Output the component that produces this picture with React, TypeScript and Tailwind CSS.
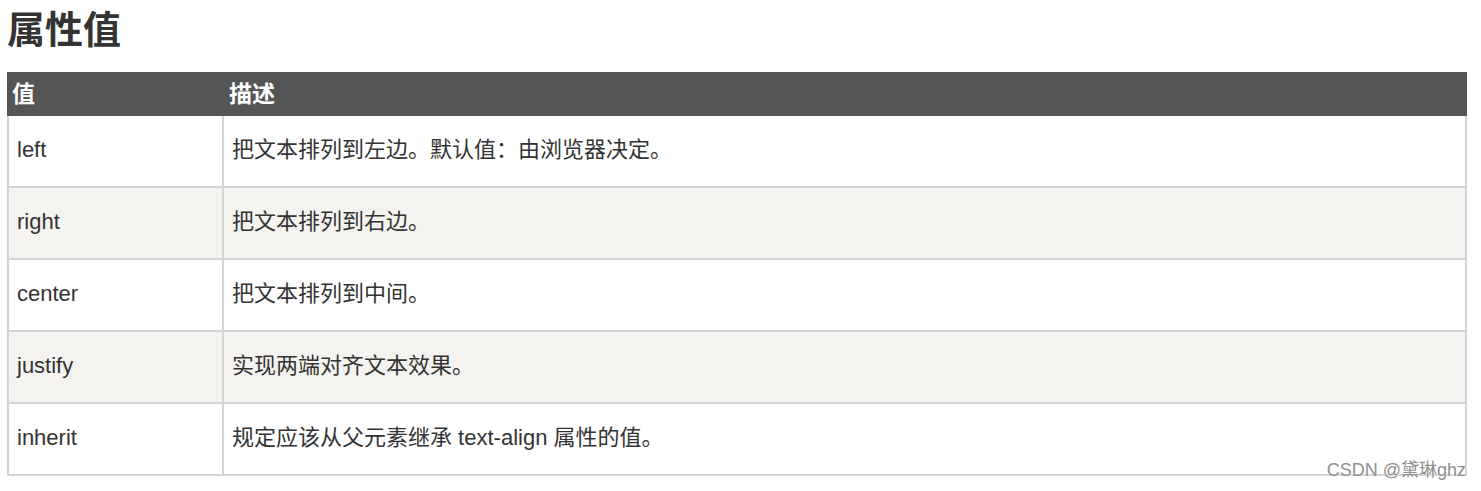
const rows = [
  { value: "left", desc: "把文本排列到左边。默认值：由浏览器决定。" },
  { value: "right", desc: "把文本排列到右边。" },
  { value: "center", desc: "把文本排列到中间。" },
  { value: "justify", desc: "实现两端对齐文本效果。" },
  { value: "inherit", desc: "规定应该从父元素继承 text-align 属性的值。" },
];

const App = () => {
  return (
    <div className="relative w-[1481px] h-[491px] bg-white font-['Liberation_Sans','Noto_Sans_CJK_SC',sans-serif] text-[#333]">
      <h2 className="pl-[7px] pt-[11px] text-[38px] leading-[38px] font-bold text-[#333] mb-[23px]">
        属性值
      </h2>

      <div className="ml-[7px] w-[1460px]">
        {/* header */}
        <div className="flex h-[44px] bg-[#555555] text-white font-bold text-[23px] items-center pt-[1px]">
          <div className="w-[217px] pl-[5px]">值</div>
          <div className="flex-1 pl-[5px]">描述</div>
        </div>

        {rows.map((row, i) => (
          <div
            key={row.value}
            className={
              i % 2 === 1
                ? "flex h-[72px] border-x-2 border-b-2 border-[#d4d4d4] bg-[#f4f3f0] text-[22px] pb-[3px]"
                : "flex h-[72px] border-x-2 border-b-2 border-[#d4d4d4] bg-white text-[22px] pb-[3px]"
            }
          >
            <div className="w-[215px] flex items-center pl-[8px] border-r-2 border-[#d4d4d4] -mb-[3px] pb-[3px]">
              {row.value}
            </div>
            <div className="flex-1 flex items-center pl-[8px]">{row.desc}</div>
          </div>
        ))}
      </div>

      <div className="absolute right-[15px] top-[458px] text-[18px] leading-[24px] text-[#8f8f8f] [text-shadow:0_0_2px_#fff]">
        CSDN @黛琳ghz
      </div>
    </div>
  );
};

export default App;
